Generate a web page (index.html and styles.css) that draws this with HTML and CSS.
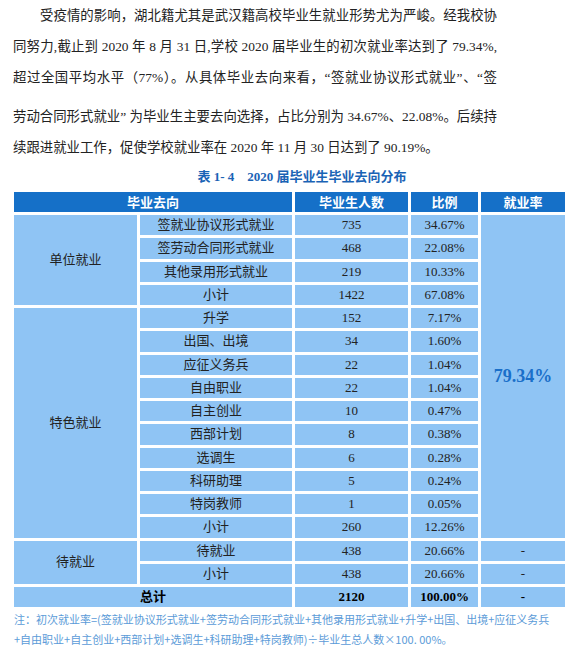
FILE: index.html
```html
<!DOCTYPE html>
<html lang="zh-CN">
<head>
<meta charset="utf-8">
<title>2020届毕业生毕业去向分布</title>
<link rel="stylesheet" href="styles.css">
</head>
<body>
<div class="page">
  <div class="para">
    <div class="ln first">受疫情的影响，湖北籍尤其是武汉籍高校毕业生就业形势尤为严峻。经我校协</div>
    <div class="ln">同努力,截止到 2020 年 8 月 31 日,学校 2020 届毕业生的初次就业率达到了 79.34%,</div>
    <div class="ln">超过全国平均水平（77%）。从具体毕业去向来看，“签就业协议形式就业”、“签</div>
    <div class="ln gap">劳动合同形式就业” 为毕业生主要去向选择，占比分别为 34.67%、22.08%。后续持</div>
    <div class="ln last">续跟进就业工作，促使学校就业率在 2020 年 11 月 30 日达到了 90.19%。</div>
  </div>

  <div class="caption">表 1- 4&nbsp;&nbsp;&nbsp;&nbsp;2020 届毕业生毕业去向分布</div>

  <table class="dist">
    <colgroup>
      <col class="c1"><col class="c2"><col class="c3"><col class="c4"><col class="c5">
    </colgroup>
    <thead>
      <tr><th colspan="2">毕业去向</th><th>毕业生人数</th><th>比例</th><th>就业率</th></tr>
    </thead>
    <tbody>
      <tr><td rowspan="4">单位就业</td><td>签就业协议形式就业</td><td>735</td><td>34.67%</td><td rowspan="14" class="rate">79.34%</td></tr>
      <tr><td>签劳动合同形式就业</td><td>468</td><td>22.08%</td></tr>
      <tr><td>其他录用形式就业</td><td>219</td><td>10.33%</td></tr>
      <tr><td>小计</td><td>1422</td><td>67.08%</td></tr>
      <tr><td rowspan="10">特色就业</td><td>升学</td><td>152</td><td>7.17%</td></tr>
      <tr><td>出国、出境</td><td>34</td><td>1.60%</td></tr>
      <tr><td>应征义务兵</td><td>22</td><td>1.04%</td></tr>
      <tr><td>自由职业</td><td>22</td><td>1.04%</td></tr>
      <tr><td>自主创业</td><td>10</td><td>0.47%</td></tr>
      <tr><td>西部计划</td><td>8</td><td>0.38%</td></tr>
      <tr><td>选调生</td><td>6</td><td>0.28%</td></tr>
      <tr><td>科研助理</td><td>5</td><td>0.24%</td></tr>
      <tr><td>特岗教师</td><td>1</td><td>0.05%</td></tr>
      <tr><td>小计</td><td>260</td><td>12.26%</td></tr>
      <tr><td rowspan="2">待就业</td><td>待就业</td><td>438</td><td>20.66%</td><td>-</td></tr>
      <tr><td>小计</td><td>438</td><td>20.66%</td><td>-</td></tr>
      <tr class="total"><td colspan="2">总计</td><td>2120</td><td>100.00%</td><td>-</td></tr>
    </tbody>
  </table>

  <div class="note">
    <div class="nl">注：初次就业率=(签就业协议形式就业+签劳动合同形式就业+其他录用形式就业+升学+出国、出境+应征义务兵</div>
    <div class="nl">+自由职业+自主创业+西部计划+选调生+科研助理+特岗教师)÷毕业生总人数×100. 00%。</div>
  </div>
</div>
</body>
</html>
```

FILE: styles.css
```css
html, body {
  margin: 0;
  padding: 0;
  background: #ffffff;
}

.page {
  width: 584px;
  font-family: "Liberation Serif", "Noto Sans CJK SC", serif;
  color: #222222;
}

.para {
  padding: 0 87px 0 13px;
  font-size: 13.4px;
}

.ln {
  height: 31px;
  line-height: 31px;
  text-align: justify;
  text-align-last: justify;
  overflow: hidden;
}

.ln.first {
  padding-left: 27px;
}

.ln.gap {
  margin-top: 8px;
}

.ln.last {
  text-align-last: left;
}

.caption {
  margin-top: 4px;
  height: 20px;
  line-height: 20px;
  text-align: center;
  padding-left: 20px;
  font-size: 13px;
  font-weight: bold;
  color: #1a63b5;
  margin-bottom: 2px;
}

.dist {
  margin-left: 11px;
  border-collapse: separate;
  border-spacing: 3px;
  table-layout: fixed;
  width: 557px;
  font-size: 13px;
}

.dist col.c1 { width: 123px; }
.dist col.c2 { width: 152px; }
.dist col.c3 { width: 113px; }
.dist col.c4 { width: 67px; }
.dist col.c5 { width: 84px; }

.dist th,
.dist td {
  padding: 0;
  height: 20px;
  line-height: 20px;
  text-align: center;
  vertical-align: middle;
  white-space: nowrap;
}

.dist tbody td {
  height: 20.25px;
}

.dist th {
  background: #1570c8;
  color: #ffffff;
  font-family: "Noto Sans CJK SC", sans-serif;
  font-weight: bold;
}

.dist td {
  background: #8fc4f4;
  color: #222222;
}

.dist td.rate {
  color: #1a6fc9;
  font-size: 18px;
  font-weight: bold;
}

.dist tr.total td {
  font-weight: bold;
  color: #000000;
}

.note {
  margin-top: -1px;
  padding-left: 14px;
  font-family: "Noto Sans CJK SC", sans-serif;
  font-size: 11px;
  color: #5b9bd8;
}

.nl {
  height: 20px;
  line-height: 20px;
  white-space: nowrap;
}
```
